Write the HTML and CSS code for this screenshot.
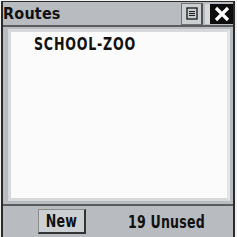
FILE: index.html
```html
<!DOCTYPE html>
<html>
<head>
<meta charset="utf-8">
<link rel="stylesheet" href="styles.css">
</head>
<body>
<div class="window">
  <div class="titlebar">
    <span class="title">Routes</span>
    <span class="menu-btn"><svg width="12" height="13" viewBox="0 0 12 13"><rect x="1" y="1" width="10" height="11" fill="none" stroke="#222" stroke-width="1.4"/><line x1="3" y1="4.5" x2="9" y2="4.5" stroke="#222" stroke-width="1.1"/><line x1="3" y1="6.5" x2="9" y2="6.5" stroke="#222" stroke-width="1.1"/><line x1="3" y1="8.5" x2="9" y2="8.5" stroke="#222" stroke-width="1.1"/></svg></span>
    <span class="close-btn"><svg width="18" height="16" viewBox="0 0 18 16"><path d="M3 2 L15 14 M15 2 L3 14" stroke="#fff" stroke-width="3.2"/></svg></span>
  </div>
  <div class="content">
    <div class="list">
      <div class="item">SCHOOL-ZOO</div>
    </div>
  </div>
  <div class="footer">
    <span class="new-btn"><span class="tall">New</span></span>
    <span class="unused tall">19 Unused</span>
  </div>
</div>
</body>
</html>
```
FILE: styles.css
```css
html, body {
  margin: 0;
  padding: 0;
  background: #f2f2f2;
}
.window {
  margin: 1px 2px 0 1px;
  width: 234px;
  height: 236px;
  box-sizing: border-box;
  border-left: 2px solid #2a2a2a;
  border-right: 2px solid #2a2a2a;
  border-top: 1px solid #2a2a2a;
  background: #b8bcc0;
  display: flex;
  flex-direction: column;
  font-family: "DejaVu Sans Condensed", "DejaVu Sans", sans-serif;
  font-weight: bold;
  color: #111;
}
.titlebar {
  height: 23px;
  display: flex;
  align-items: center;
  border-bottom: 2px solid #5a5c5e;
  padding-left: 0;
}
.title {
  flex: 1;
  font-size: 16px;
  letter-spacing: 0.2px;
}
.menu-btn {
  width: 19px;
  height: 20px;
  display: flex;
  align-items: center;
  justify-content: center;
  background: #cdd0d3;
  border: 1px solid #707274;
  border-right: 2px solid #505254;
}
.close-btn {
  width: 23px;
  height: 20px;
  margin-left: 2px;
  border-left: 5px solid #d6d8da;
  background: #0d0d0d;
  display: flex;
  align-items: center;
  justify-content: center;
}
.content {
  flex: 1;
  padding: 2px 3px 3px 5px;
  display: flex;
}
.list {
  flex: 1;
  background: #fbfbfb;
  border: 3px solid #d6d8da;
  border-right-color: #e2e4e6;
  padding: 2px 0 0 23px;
}
.item {
  font-size: 14px;
  letter-spacing: 0.8px;
  transform: scaleY(1.25);
  transform-origin: top left;
}
.footer {
  height: 31px;
  border-top: 2px solid #5a5c5e;
  display: flex;
  align-items: center;
  padding-left: 35px;
  gap: 42px;
  font-size: 14px;
}
.tall {
  display: inline-block;
  transform: scaleY(1.25);
}
.new-btn {
  width: 45px;
  height: 22px;
  display: flex;
  align-items: center;
  justify-content: center;
  background: #cdd0d3;
  border: 1px solid #8a8c8e;
  border-right: 2px solid #333;
  border-bottom: 2px solid #333;
  font-size: 14px;
  letter-spacing: 0.3px;
}
.unused {
  letter-spacing: 0.2px;
}
```
